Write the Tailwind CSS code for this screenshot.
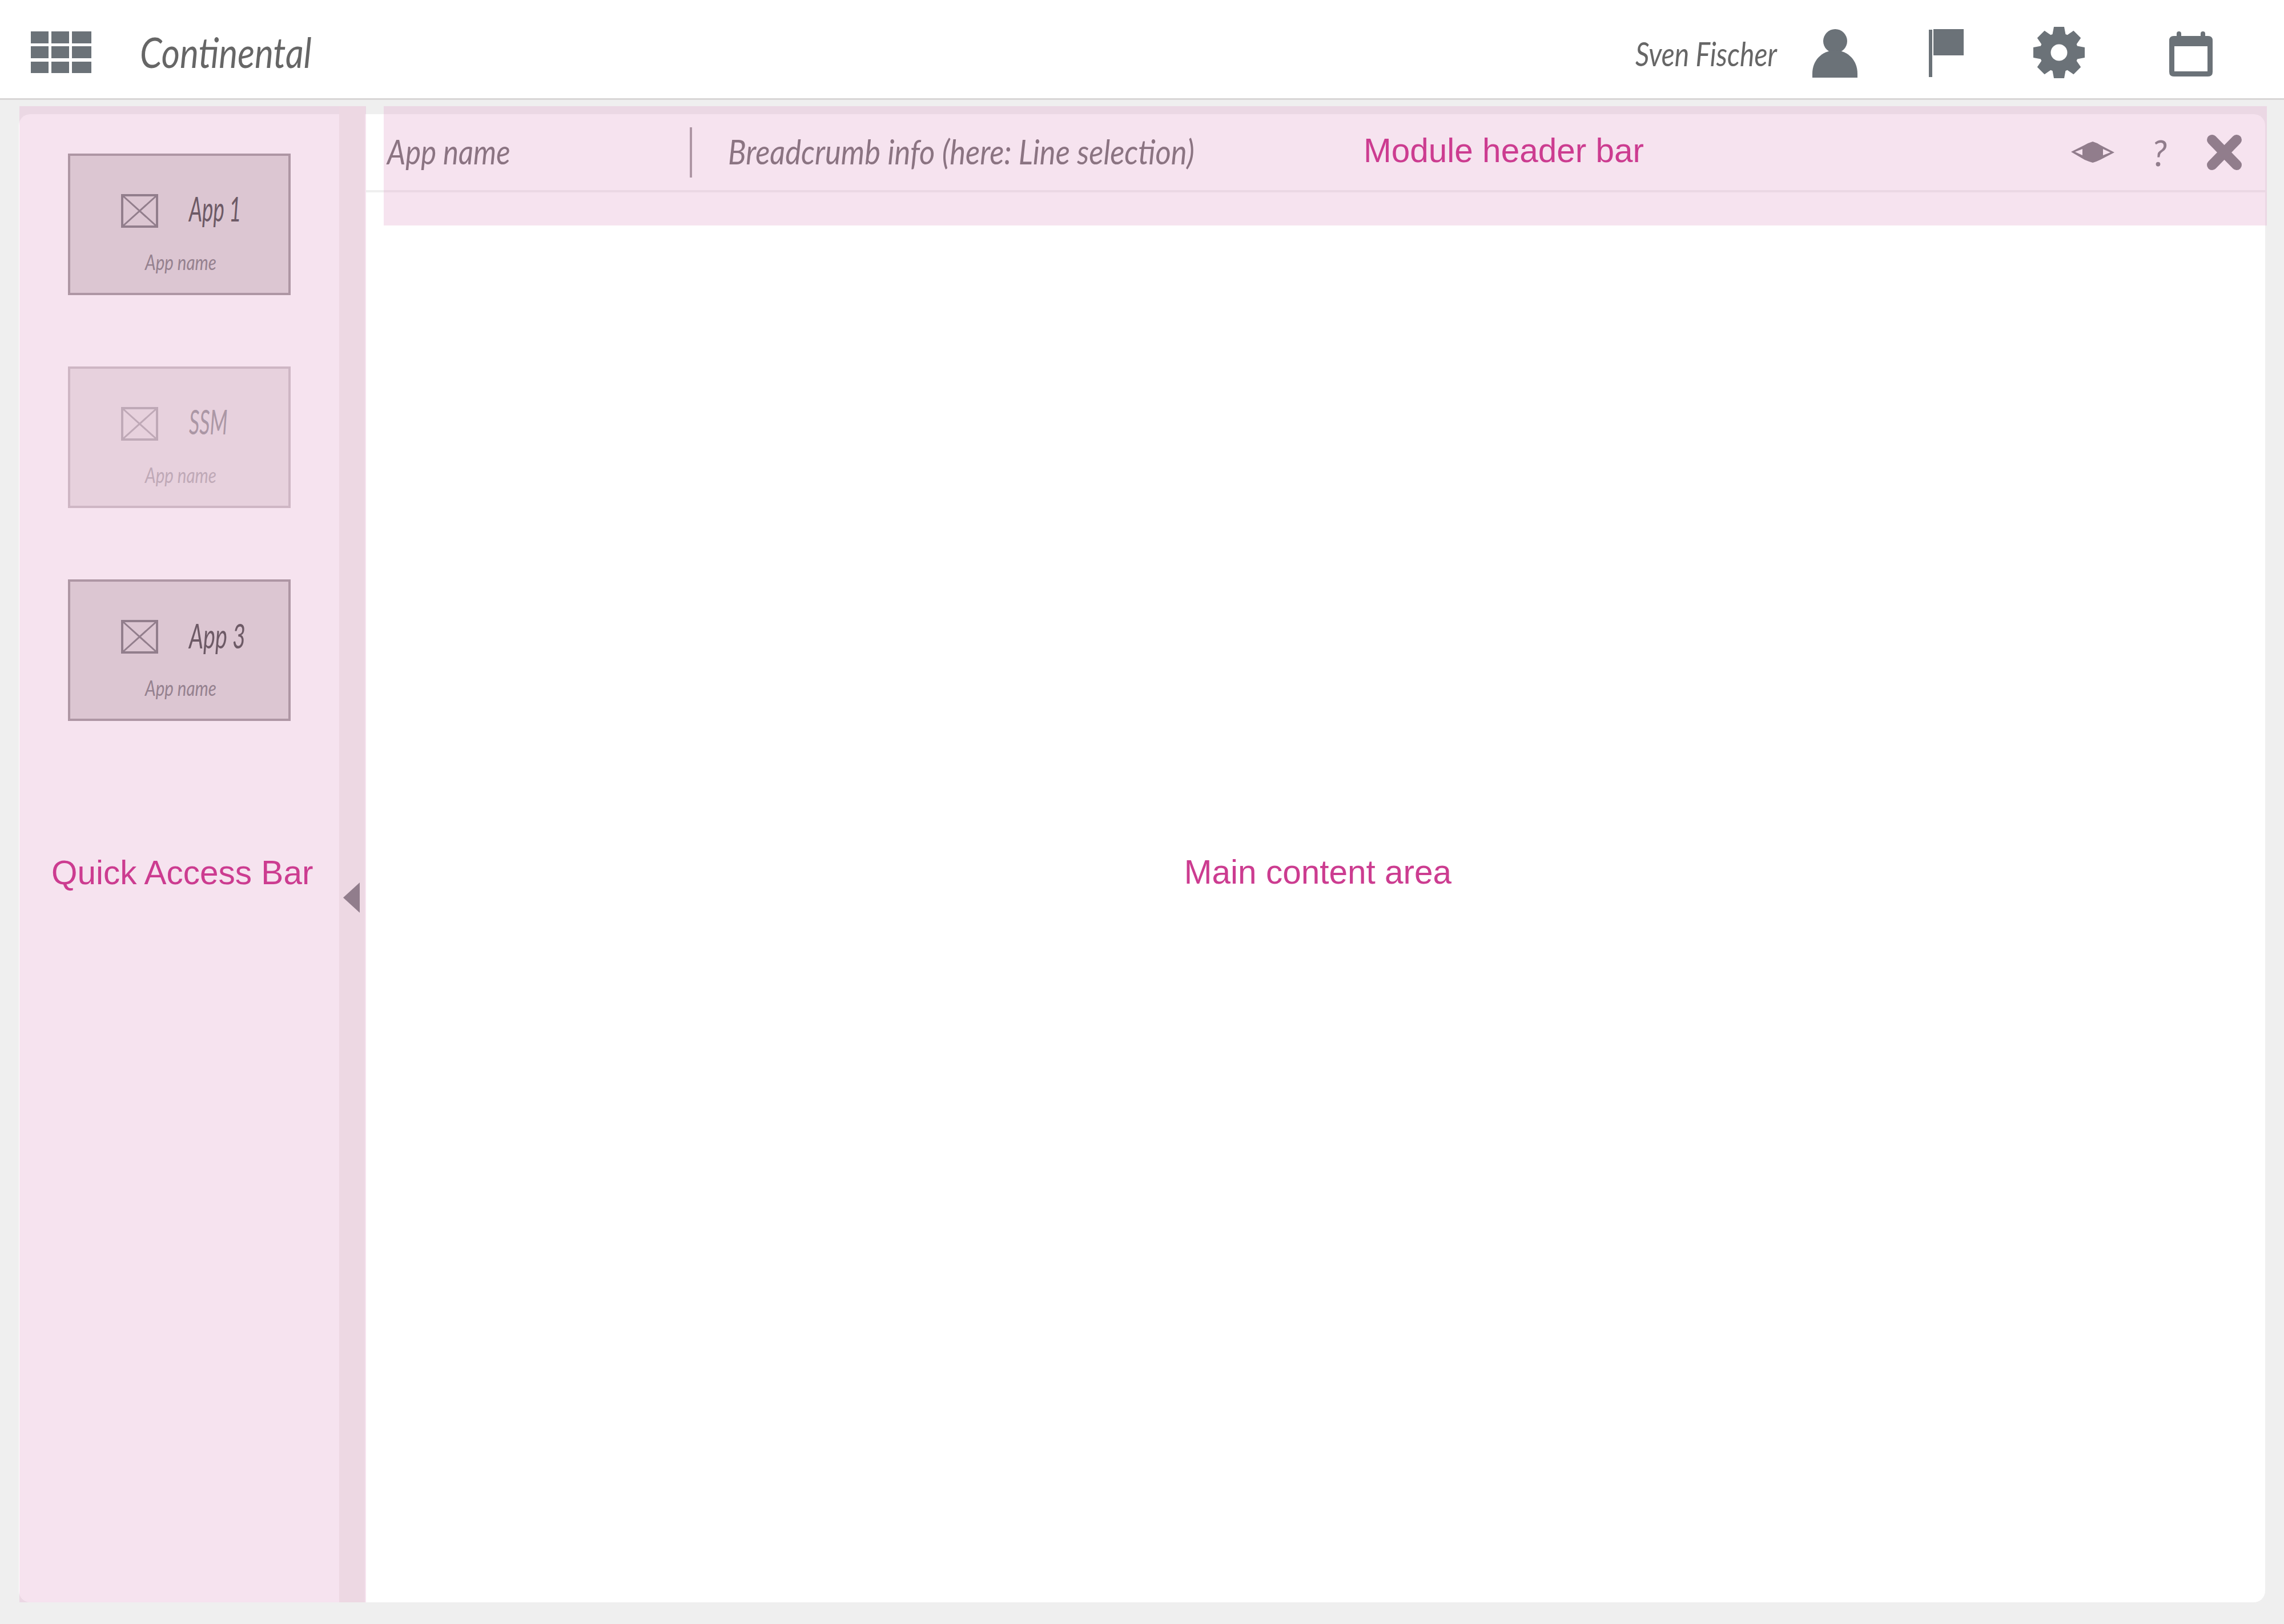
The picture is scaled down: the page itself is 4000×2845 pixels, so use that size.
<!DOCTYPE html>
<html lang="en">
  <head>
    <meta charset="UTF-8" />
    <meta name="viewport" content="width=device-width, initial-scale=1.0" />
    <title>Continental</title>
    <script src="https://cdn.jsdelivr.net/npm/@tailwindcss/browser@4"></script>
  </head>
  <body class="bg-[#efefef]">
    <div class="flex h-[2845px] w-[4000px] flex-col overflow-hidden [font-family:'Liberation_Sans',Arial,sans-serif]">
      <!-- top bar -->
      <header class="flex h-[175px] shrink-0 items-center border-b-[3px] border-[#d8d6d6] bg-white pt-[10px] pr-[125px] pl-[54px]">
        <div class="grid h-[73px] w-[106px] grid-cols-[31px_31px_34px] grid-rows-[21px_21px_20px] gap-x-[5px] gap-y-[5.5px]">
          <div class="bg-[#6b7278]"></div><div class="bg-[#6b7278]"></div><div class="bg-[#6b7278]"></div>
          <div class="bg-[#6b7278]"></div><div class="bg-[#6b7278]"></div><div class="bg-[#6b7278]"></div>
          <div class="bg-[#6b7278]"></div><div class="bg-[#6b7278]"></div><div class="bg-[#6b7278]"></div>
        </div>
        <div class="ml-[85px] w-[298px] [font-family:Lato,sans-serif]">
          <span class="inline-block origin-left scale-x-[.84] text-[74px] leading-none whitespace-nowrap text-[#666666] italic">Continental</span>
        </div>
        <div class="mt-[6px] ml-auto w-[249px] [font-family:Lato,sans-serif]">
          <span class="inline-block origin-left scale-x-[.83] text-[58px] leading-none whitespace-nowrap text-[#666666] italic">Sven Fischer</span>
        </div>
        <svg class="mt-[4px] ml-[61px]" width="79" height="85" viewBox="0 0 79 85" fill="#6b7278">
          <circle cx="40" cy="21" r="21" />
          <path d="M0 85V78C0 55 16 38 40 37C63 38 79 55 79 78V85Z" />
        </svg>
        <svg class="mt-[4px] ml-[125px]" width="61" height="85" viewBox="0 0 61 85" fill="#6b7278">
          <rect x="0" y="1" width="6" height="83" />
          <rect x="8" y="0" width="53" height="46" />
        </svg>
        <svg class="mt-[2px] ml-[122px]" width="90" height="90" viewBox="0 0 90 90">
          <g fill="#6b7278">
            <circle cx="45" cy="45" r="34" />
            <path d="M36 0H54L57 16H33Z" />
            <path d="M36 0H54L57 16H33Z" transform="rotate(45 45 45)" />
            <path d="M36 0H54L57 16H33Z" transform="rotate(90 45 45)" />
            <path d="M36 0H54L57 16H33Z" transform="rotate(135 45 45)" />
            <path d="M36 0H54L57 16H33Z" transform="rotate(180 45 45)" />
            <path d="M36 0H54L57 16H33Z" transform="rotate(225 45 45)" />
            <path d="M36 0H54L57 16H33Z" transform="rotate(270 45 45)" />
            <path d="M36 0H54L57 16H33Z" transform="rotate(315 45 45)" />
          </g>
          <circle cx="45" cy="45" r="14.5" fill="#ffffff" />
        </svg>
        <svg class="mt-[6px] ml-[148px]" width="76" height="79" viewBox="0 0 76 79">
          <path fill="#6b7278" fill-rule="evenodd" d="M13 8V4Q13 0 17 0Q21 0 21 4V8H55V4Q55 0 59 0Q63 0 63 4V8H68Q76 8 76 16V71Q76 79 68 79H8Q0 79 0 71V16Q0 8 8 8ZM9 26V70H67V26Z" />
        </svg>
      </header>

      <main class="relative flex-1 px-[33px] pt-[25px] pb-[38px]">
        <!-- white content panel -->
        <div class="flex h-full flex-col rounded-[20px] bg-white">
          <div class="ml-[608px] h-[137px] shrink-0 border-b-4 border-[#efefef]"></div>
          <div class="flex flex-1 items-center justify-center pb-[88px] pl-[616px] text-[58.5px] leading-[70px] text-[#cc3c90]">Main content area</div>
        </div>

        <!-- quick access overlay -->
        <aside class="absolute top-[11px] bottom-[38px] left-[34px] flex w-[607px] bg-[#e5afd0]/35">
          <div class="flex w-[560px] flex-col pt-[83px]">
            <div class="ml-[85px] flex h-[248px] w-[390px] flex-col border-4 border-[#ae96a4] bg-[#dcc6d2] pt-[67px]">
              <div class="flex h-[59px] items-center pl-[89px]">
                <svg width="65" height="59" viewBox="0 0 65 59" fill="none" stroke="#927e8c" stroke-width="4"><rect x="2" y="2" width="61" height="55" /><path stroke-width="3" d="M2 2L63 57M63 2L2 57" /></svg>
                <div class="mb-[10px] ml-[54px] [font-family:Lato,sans-serif] text-[60px] leading-none text-[#6d5a66] italic"><span class="inline-block origin-left scale-x-[.61] whitespace-nowrap">App 1</span></div>
              </div>
              <div class="mt-[42px] pl-[131px] [font-family:Lato,sans-serif] text-[36px] leading-none text-[#95818f] italic"><span class="inline-block origin-left scale-x-[.82] whitespace-nowrap">App name</span></div>
            </div>
            <div class="mt-[125px] ml-[85px] flex h-[248px] w-[390px] flex-col border-4 border-[#ceb6c4] bg-[#e7d1dd] pt-[67px]">
              <div class="flex h-[59px] items-center pl-[89px]">
                <svg width="65" height="59" viewBox="0 0 65 59" fill="none" stroke="#bfa9b7" stroke-width="4"><rect x="2" y="2" width="61" height="55" /><path stroke-width="3" d="M2 2L63 57M63 2L2 57" /></svg>
                <div class="mb-[10px] ml-[54px] [font-family:Lato,sans-serif] text-[60px] leading-none text-[#ab97a5] italic"><span class="inline-block origin-left scale-x-[.6] whitespace-nowrap">SSM</span></div>
              </div>
              <div class="mt-[42px] pl-[131px] [font-family:Lato,sans-serif] text-[36px] leading-none text-[#bfa9b7] italic"><span class="inline-block origin-left scale-x-[.82] whitespace-nowrap">App name</span></div>
            </div>
            <div class="mt-[125px] ml-[85px] flex h-[248px] w-[390px] flex-col border-4 border-[#ae96a4] bg-[#dcc6d2] pt-[67px]">
              <div class="flex h-[59px] items-center pl-[89px]">
                <svg width="65" height="59" viewBox="0 0 65 59" fill="none" stroke="#927e8c" stroke-width="4"><rect x="2" y="2" width="61" height="55" /><path stroke-width="3" d="M2 2L63 57M63 2L2 57" /></svg>
                <div class="mb-[6px] ml-[54px] [font-family:Lato,sans-serif] text-[60px] leading-none text-[#6d5a66] italic"><span class="inline-block origin-left scale-x-[.66] whitespace-nowrap">App 3</span></div>
              </div>
              <div class="mt-[42px] pl-[131px] [font-family:Lato,sans-serif] text-[36px] leading-none text-[#95818f] italic"><span class="inline-block origin-left scale-x-[.82] whitespace-nowrap">App name</span></div>
            </div>
            <div class="mt-[231px] ml-[56px] text-[58.5px] leading-[70px] whitespace-nowrap text-[#cc3c90]">Quick Access Bar</div>
          </div>
          <div class="w-[45px] bg-[#edd8e3] pt-[1360px] pl-[7px]">
            <svg width="29" height="53" viewBox="0 0 29 53" fill="#917d8c"><path d="M0 26.5L29 0V53Z" /></svg>
          </div>
        </aside>

        <!-- module header overlay -->
        <section class="absolute top-[11px] right-[30px] left-[672px] h-[209px] bg-[#e5afd0]/35 pt-[14px]">
          <div class="flex h-[133px] items-center pl-[6px]">
            <div class="mb-[4px] w-[530px] [font-family:Lato,sans-serif] text-[60px] leading-none text-[#8b7482] italic"><span class="inline-block origin-left scale-x-[.85] whitespace-nowrap">App name</span></div>
            <div class="h-[88px] w-1 bg-[#ae96a4]"></div>
            <div class="mb-[4px] ml-[63px] w-[818px] [font-family:Lato,sans-serif] text-[60px] leading-none text-[#8b7482] italic"><span class="inline-block origin-left scale-x-[.877] whitespace-nowrap">Breadcrumb info (here: Line selection)</span></div>
            <div class="mb-[5px] ml-[295px] text-[58.5px] leading-[70px] whitespace-nowrap text-[#cc3c90]">Module header bar</div>
            <svg class="ml-auto" width="76" height="37" viewBox="0 0 76 37">
              <path fill="#917d8c" fill-rule="evenodd" d="M0 18L24 6Q31 2 38 0Q45 2 51 6L76 19L51 32Q45 35 38 37Q31 35 24 32ZM7 18L20 24V13ZM56 13V24L69 19Z" />
            </svg>
            <div class="ml-[66px] w-[24px] [font-family:Lato,sans-serif] text-[62px] leading-none text-[#917d8c] italic">?</div>
            <svg class="mr-[44px] ml-[72px]" width="61" height="62" viewBox="0 0 61 62">
              <path stroke="#917d8c" stroke-width="18" stroke-linecap="round" fill="none" d="M9 9L52 53M52 9L9 53" />
            </svg>
          </div>
        </section>
      </main>
    </div>
  </body>
</html>
